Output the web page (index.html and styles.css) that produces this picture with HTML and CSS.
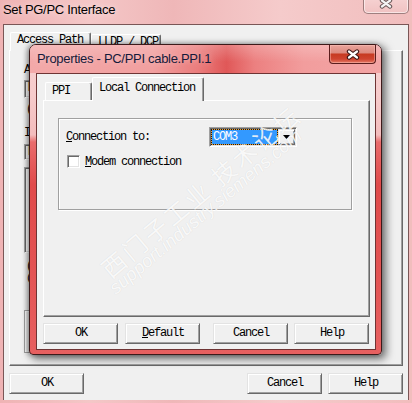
FILE: index.html
```html
<!DOCTYPE html>
<html>
<head>
<meta charset="utf-8">
<title>Set PG/PC Interface</title>
<link rel="stylesheet" href="styles.css">
</head>
<body>
<div class="win">
  <div class="win-title">
    <span class="win-caption">Set PG/PC Interface</span>
    <div class="win-close">
      <svg width="14" height="11" viewBox="0 0 14 11"><path d="M3 2.5 L11 8.5 M11 2.5 L3 8.5" stroke="#6b5a5a" stroke-width="4.4" stroke-linecap="round" fill="none"/><path d="M3 2.5 L11 8.5 M11 2.5 L3 8.5" stroke="#f4f4f4" stroke-width="2.2" stroke-linecap="round" fill="none"/></svg>
    </div>
  </div>
  <div class="win-client">
    <div class="tabs">
      <div class="tab tab-sel tab-access">Access Path</div>
      <div class="tab tab-lldp">LLDP / DCP</div>
    </div>
    <div class="panel outer-panel">
      <div class="txt">A</div>
      <div class="bg-combo txt">M</div>
      <div class="txt bg-note">(</div>
      <div class="txt bg-label2">I</div>
      <div class="bg-edit txt">P</div>
      <div class="bg-list"></div>
      <div class="txt bg-note2">(</div>
      <div class="txt bg-note3">(</div>
      <div class="bg-group"></div>
    </div>
    <div class="btnrow outer-btns">
      <button class="btn">OK</button>
      <button class="btn btn-push">Cancel</button>
      <button class="btn btn-help-outer">Help</button>
    </div>
  </div>
</div>

<div class="props">
  <div class="props-title">
    <span class="props-caption">Properties - PC/PPI cable.PPI.1</span>
    <div class="props-close">
      <svg width="14" height="11" viewBox="0 0 14 11"><path d="M3 2.5 L11 8.5 M11 2.5 L3 8.5" stroke="#3a1414" stroke-width="4.4" stroke-linecap="round" fill="none"/><path d="M3 2.5 L11 8.5 M11 2.5 L3 8.5" stroke="#ffffff" stroke-width="2.2" stroke-linecap="round" fill="none"/></svg>
    </div>
  </div>
  <div class="props-client">
    <div class="ptabs">
      <div class="tab tab-ppi">PPI</div>
      <div class="tab tab-sel tab-local">Local Connection</div>
    </div>
    <div class="panel inner-panel">
      <div class="group">
        <div class="row">
          <span class="lbl txt"><u>C</u>onnection to:</span>
          <div class="combo">
            <div class="combo-sel txt">COM3</div>
            <div class="combo-btn">
              <svg width="7" height="4" viewBox="0 0 7 4"><path d="M0 0 H7 L3.5 4 Z" fill="#000"/></svg>
            </div>
          </div>
        </div>
        <div class="row row2">
          <div class="chk"></div>
          <span class="txt chk-lbl"><u>M</u>odem connection</span>
        </div>
      </div>
    </div>
    <div class="btnrow inner-btns">
      <button class="btn">OK</button>
      <button class="btn btn-default"><u>D</u>efault</button>
      <button class="btn btn-cancel">Cancel</button>
      <button class="btn btn-help">Help</button>
    </div>
  </div>
</div>

<div class="wm">
  <div class="wm-cn">西门子工业 技术论坛</div>
  <div class="wm-en">support.industry.siemens.com</div>
</div>
</body>
</html>
```
FILE: styles.css
```css
html, body {
  margin: 0;
  padding: 0;
}
body {
  width: 412px;
  height: 403px;
  overflow: hidden;
  position: relative;
  background: #f2bcbc;
  font-family: "Liberation Mono", monospace;
  font-size: 12px;
  color: #000;
}
.txt, .tab, .btn {
  font-family: "Liberation Mono", monospace;
  font-size: 12px;
  letter-spacing: -1.2px;
  white-space: nowrap;
}
u {
  text-underline-offset: 1px;
}

/* ---------- outer window ---------- */
.win {
  height: 403px;
  display: flex;
  flex-direction: column;
  background: linear-gradient(90deg, #efb3b4 0%, #f4c7c7 22%, #efb7b8 42%, #f5cbcb 68%, #f1bdbd 100%);
}
.win-title {
  height: 24px;
  box-sizing: border-box;
  padding-left: 3px;
  display: flex;
  align-items: flex-start;
}
.win-caption {
  font-family: "Liberation Sans", sans-serif;
  font-size: 13px;
  letter-spacing: -0.3px;
  line-height: 19px;
  color: #000;
  text-shadow: 0 0 6px rgba(255, 255, 255, 0.7);
}
.win-close {
  margin-left: auto;
  margin-right: 3px;
  margin-top: -6px;
  width: 46px;
  height: 20px;
  box-sizing: border-box;
  border: 1px solid rgba(100, 70, 70, 0.6);
  border-top: none;
  border-radius: 0 0 5px 5px;
  background: linear-gradient(180deg, #f7d6d6, #f1c2c2);
  box-shadow: inset 0 0 0 1px rgba(255, 255, 255, 0.55);
  display: flex;
  align-items: center;
  justify-content: center;
}
.win-client {
  flex: 1;
  margin: 0 3px 3px;
  border: 1px solid #7a5656;
  border-bottom: none;
  background: #f0f0f0;
  padding: 7px 5px 0;
  display: flex;
  flex-direction: column;
}

/* ---------- tabs ---------- */
.tabs {
  display: flex;
  align-items: flex-end;
  height: 18px;
}
.tab {
  box-sizing: border-box;
  height: 16px;
  border: 1px solid;
  border-color: #ffffff #696969 transparent #ffffff;
  border-bottom: none;
  border-radius: 2px 2px 0 0;
  box-shadow: inset -1px 0 #a0a0a0;
  background: #f0f0f0;
  padding-left: 6px;
  line-height: 14px;
}
.tab-sel {
  height: 19px;
  margin-bottom: -1px;
  position: relative;
  z-index: 1;
}
.tab-access {
  margin-left: 1px;
  width: 81px;
}
.tab-lldp {
  width: 70px;
}

/* ---------- panels ---------- */
.panel {
  box-sizing: border-box;
  border: 1px solid;
  border-color: #ffffff #696969 #696969 #ffffff;
  box-shadow: inset -1px -1px #a0a0a0;
  background: #f0f0f0;
}
.outer-panel {
  width: 394px;
  height: 316px;
  padding: 12px 0 0 14px;
}
.outer-panel .txt {
  line-height: 14px;
}
.bg-combo, .bg-edit, .bg-list {
  box-sizing: border-box;
  border: 1px solid;
  border-color: #a0a0a0 #ffffff #ffffff #a0a0a0;
  box-shadow: inset 1px 1px #696969, inset -1px -1px #e3e3e3;
  background: #ffffff;
  padding-left: 3px;
}
.bg-combo {
  margin-top: 3px;
  width: 300px;
  height: 18px;
}
.bg-note {
  margin-top: 4px;
  padding-left: 2px;
}
.bg-label2 {
  margin-top: 10px;
}
.bg-edit {
  margin-top: 4px;
  width: 230px;
  height: 16px;
  line-height: 13px;
}
.bg-list {
  margin-top: 7px;
  width: 300px;
  height: 86px;
}
.outer-panel .bg-note2,
.outer-panel .bg-note3 {
  line-height: 12px;
  height: 12px;
  width: 8px;
  padding-left: 2px;
  overflow: visible;
}
.outer-panel .bg-note2 {
  margin-top: 7px;
}
.outer-panel .bg-note3 {
  margin-top: 0;
  font-size: 11px;
}
.bg-group {
  margin-top: 26px;
  width: 340px;
  height: 43px;
  box-sizing: border-box;
  border: 1px solid #a0a0a0;
  box-shadow: inset 1px 1px #fff;
}

/* ---------- buttons ---------- */
.btnrow {
  display: flex;
}
.btn {
  box-sizing: border-box;
  width: 75px;
  height: 21px;
  padding: 0 0 0 1px;
  margin: 0;
  background: #f0f0f0;
  color: #000;
  border: 1px solid;
  border-color: #e3e3e3 #696969 #696969 #e3e3e3;
  box-shadow: inset 1px 1px #ffffff, inset -1px -1px #a0a0a0;
  line-height: 17px;
}
.outer-btns {
  margin-top: 7px;
}
.btn-push {
  margin-left: auto;
}
.btn-help-outer {
  margin-left: 6px;
}

/* ---------- properties dialog ---------- */
.props {
  position: absolute;
  left: 29px;
  top: 44px;
  width: 353px;
  height: 311px;
  box-sizing: border-box;
  border: 1px solid #3d1a1a;
  border-radius: 7px 7px 4px 4px;
  padding: 0 5px 4px 6px;
  background: linear-gradient(180deg, #f7d0d0 0, #f6cbcb 50px, #f3bdbd 90px, #e96c6c 97px, #e04a4a 140px, #e35454 230px, #e76060 100%);
  box-shadow: 3px 3px 9px 1px rgba(0, 0, 0, 0.55), -2px 0 5px rgba(0, 0, 0, 0.3);
  display: flex;
  flex-direction: column;
  z-index: 2;
}
.props-title {
  height: 28px;
  margin: 0 -5px 0 -6px;
  padding-left: 7px;
  border-radius: 6px 6px 0 0;
  background:
    linear-gradient(180deg, rgba(255, 255, 255, 0.22), rgba(255, 255, 255, 0) 60%),
    linear-gradient(90deg, #f3a9a9 0%, #f19f9f 35%, #ea7c7c 48%, #e05858 56%, #ec8080 64%, #f29d9d 78%, #f3a5a5 100%);
  display: flex;
  align-items: flex-start;
}
.props-caption {
  margin-top: 4px;
  font-family: "Liberation Sans", sans-serif;
  font-size: 13px;
  letter-spacing: -0.3px;
  line-height: 19px;
  color: #151a3a;
  text-shadow: 0 0 6px rgba(255, 230, 230, 0.6);
}
.props-close {
  margin-left: auto;
  margin-right: 5px;
  width: 47px;
  height: 19px;
  box-sizing: border-box;
  border: 1px solid #5a1d1d;
  border-top: none;
  border-radius: 0 0 4px 4px;
  background: linear-gradient(180deg, #eaa49c 0%, #dd8b80 42%, #c73a22 52%, #cf4430 78%, #e57a66 100%);
  box-shadow: inset 0 0 0 1px rgba(255, 200, 190, 0.45);
  display: flex;
  align-items: center;
  justify-content: center;
}
.props-client {
  flex: 1;
  box-sizing: border-box;
  border: 1px solid #6e3434;
  background: #f0f0f0;
  padding: 3px 6px 0;
  display: flex;
  flex-direction: column;
}
.ptabs {
  display: flex;
  align-items: flex-end;
  height: 23px;
}
.tab-ppi {
  height: 18px;
  margin-left: 2px;
  width: 47px;
  line-height: 16px;
}
.tab-local {
  height: 24px;
  width: 112px;
  line-height: 21px;
}
.inner-panel {
  width: 327px;
  height: 217px;
  padding: 17px 0 0 14px;
}
.group {
  width: 294px;
  height: 92px;
  box-sizing: border-box;
  border: 1px solid #a0a0a0;
  box-shadow: inset 1px 1px #ffffff, 1px 1px #ffffff;
  padding: 8px 0 0 7px;
}
.row {
  display: flex;
  align-items: center;
  height: 20px;
}
.lbl {
  width: 143px;
}
.combo {
  box-sizing: border-box;
  width: 88px;
  height: 20px;
  border: 1px solid;
  border-color: #a0a0a0 #ffffff #ffffff #a0a0a0;
  box-shadow: inset 1px 1px #696969, inset -1px -1px #e3e3e3;
  background: #ffffff;
  padding: 1px;
  display: flex;
}
.combo-sel {
  flex: 1;
  height: 16px;
  box-sizing: border-box;
  border: 1px dotted #1a1a1a;
  background: linear-gradient(#3399ff, #3399ff) padding-box, #f0a030;
  color: #ffffff;
  line-height: 14px;
  padding-left: 1px;
}
.combo-btn {
  width: 17px;
  height: 16px;
  box-sizing: border-box;
  border: 1px solid;
  border-color: #e3e3e3 #696969 #696969 #e3e3e3;
  box-shadow: inset 1px 1px #ffffff, inset -1px -1px #a0a0a0;
  background: #f0f0f0;
  display: flex;
  align-items: center;
  justify-content: center;
}
.row2 {
  margin-top: 8px;
  height: 13px;
}
.chk {
  width: 13px;
  height: 13px;
  margin-left: 1px;
  box-sizing: border-box;
  border: 1px solid;
  border-color: #a0a0a0 #ffffff #ffffff #a0a0a0;
  box-shadow: inset 1px 1px #696969, inset -1px -1px #e3e3e3;
  background: #ffffff;
}
.chk-lbl {
  margin-left: 5px;
}
.inner-btns {
  margin-top: 6px;
}
.btn-default {
  margin-left: 7px;
}
.btn-cancel {
  margin-left: 13px;
}
.btn-help {
  margin-left: 6px;
}

/* ---------- watermark ---------- */
.wm {
  position: absolute;
  left: 96px;
  top: 262px;
  transform: rotate(-40deg);
  transform-origin: 0 0;
  z-index: 5;
  pointer-events: none;
  white-space: nowrap;
  color: rgba(255, 255, 255, 0.85);
  text-shadow: 0 0 1px rgba(0, 0, 0, 0.12);
}
.wm-cn {
  font-family: "Noto Sans CJK SC", sans-serif;
  font-size: 24px;
  line-height: 26px;
  letter-spacing: 3px;
}
.wm-en {
  font-family: "Liberation Sans", sans-serif;
  font-style: italic;
  font-size: 18.5px;
  line-height: 18px;
  margin: -3px 0 0 -6px;
}
```
